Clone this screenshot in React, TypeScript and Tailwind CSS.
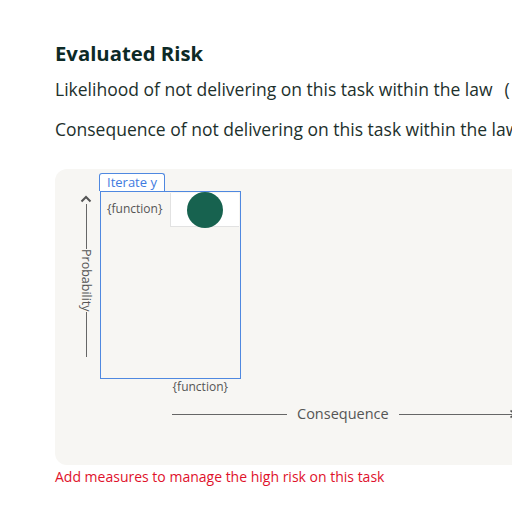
import React from "react";

function ChevronUp() {
  return (
    <svg width="12" height="8" viewBox="0 0 12 8" fill="none">
      <path d="M1.5 6.5 L6 2 L10.5 6.5" stroke="#555" strokeWidth="2" />
    </svg>
  );
}

export default function App() {
  return (
    <div className="w-[512px] h-[512px] overflow-hidden bg-white font-['Open_Sans',sans-serif]">
      <div className="w-[600px] pl-[55px] pt-[40px]">
        <h2 className="text-[20.3px] font-bold leading-[26px] text-[#0d2a26]">Evaluated Risk</h2>

        <div className="mt-[11px] flex items-center whitespace-nowrap text-[17.5px] leading-[24px] text-[#1d302c]">
          <span>Likelihood of not delivering on this task within the law</span>
          <span className="ml-[12px]">(</span>
        </div>
        <div className="mt-[16px] whitespace-nowrap text-[17.5px] leading-[24px] text-[#1d302c]">
          Consequence of not delivering on this task within the law
        </div>

        <div className="mt-[28px] h-[296px] rounded-xl bg-[#f7f6f3] pt-[4px]">
          <div className="flex">
            <div className="flex w-[44px] flex-col items-center pl-[18px] pt-[22px]">
              <ChevronUp />
              <div className="mt-[1px] h-[45px] w-px bg-[#666]" />
              <span className="my-[6px] text-[12.5px] leading-[14px] text-[#555] [writing-mode:vertical-rl]">
                Probability
              </span>
              <div className="h-[45px] w-px bg-[#666]" />
            </div>

            <div className="flex flex-col">
              <div className="flex">
                <div className="h-[18px] rounded-t-[3px] border border-b-0 border-[#4f88e0] bg-white px-[7px] text-[13px] leading-[17px] text-[#3f7be0]">
                  Iterate y
                </div>
              </div>
              <div className="ml-px h-[188px] w-[141px] border border-[#4f88e0]">
                <div className="flex">
                  <div className="w-[69px] pl-[6px] pt-[10px] text-[12px] leading-[14px] text-[#555]">
                    {"{function}"}
                  </div>
                  <div className="mt-px flex h-[34px] w-[69px] items-center justify-center border-b border-l border-[#e2e2e2] bg-white">
                    <div className="h-[36px] w-[36px] rounded-full bg-[#17624f]" />
                  </div>
                </div>
              </div>
              <div className="pr-[13px] pt-[1px] text-right text-[12px] leading-[14px] text-[#555]">
                {"{function}"}
              </div>
            </div>
          </div>

          <div className="ml-[117px] mt-[10px] flex items-center">
            <div className="h-px w-[115px] bg-[#666]" />
            <span className="mx-[10px] text-[14.5px] leading-[20px] text-[#555]">Consequence</span>
            <div className="h-px w-[116px] bg-[#666]" />
            <svg width="8" height="10" viewBox="0 0 8 10" fill="none" className="-ml-[6px]">
              <path d="M1.5 1.5 L6 5 L1.5 8.5" stroke="#555" strokeWidth="1.6" />
            </svg>
          </div>
        </div>

        <div className="mt-[2px] text-[14px] leading-[20px] text-[#e0112b]">
          Add measures to manage the high risk on this task
        </div>
      </div>
    </div>
  );
}
